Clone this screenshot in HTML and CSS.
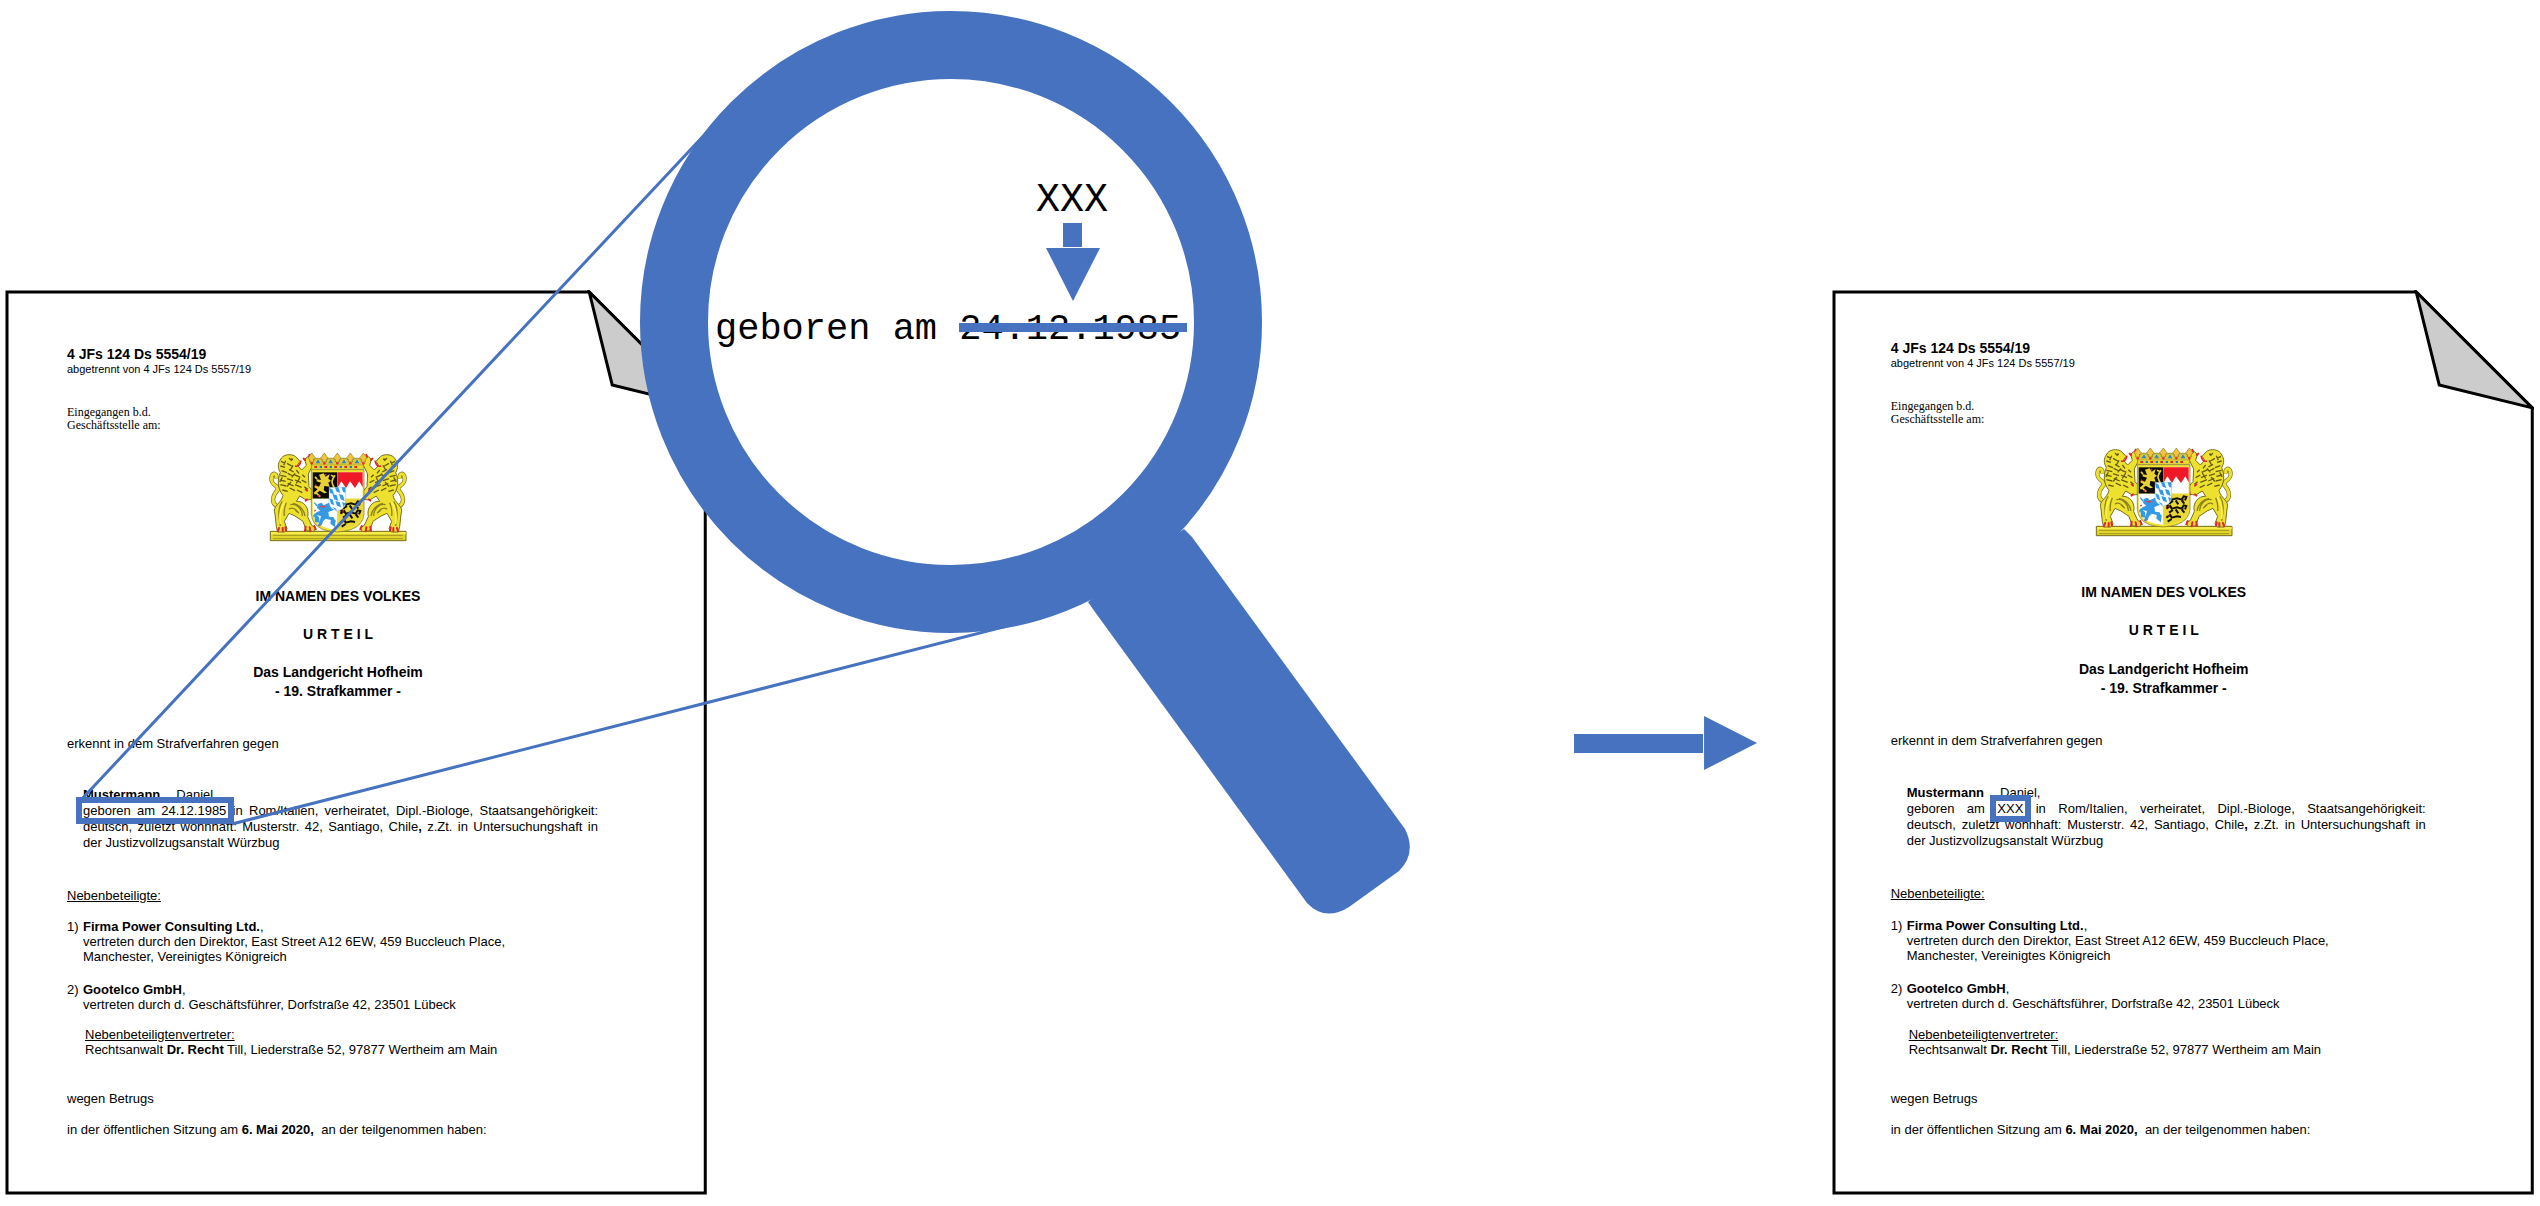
FILE: index.html
```html
<!DOCTYPE html>
<html lang="de">
<head>
<meta charset="utf-8">
<meta name="viewport" content="width=device-width, initial-scale=1">
<title>Anonymisierung eines Urteils</title>
<link rel="stylesheet" href="styles.css">
</head>
<body>
<svg class="defs" aria-hidden="true">
  <defs>
    <g id="lion">
      <path d="M78 204C50 192 60 168 74 152C78 134 50 142 56 112C60 98 72 102 70 118" fill="none" stroke="#77701c" stroke-width="13"/>
      <path d="M78 204C50 192 60 168 74 152C78 134 50 142 56 112C60 98 72 102 70 118" fill="none" stroke="#eee02f" stroke-width="9"/>
      <path d="M82 62C88 44 116 42 128 52L141 66L133 78L146 92L160 78L155 60L164 52L178 60L180 76L166 104L168 142L184 160L180 180L160 182L140 170L130 186C152 184 170 206 164 232L176 258L188 266L182 277L160 274L150 246L126 230L108 222L94 246L102 268L96 278L74 278L70 262L66 224C56 200 86 192 90 168C74 150 72 120 82 100C74 86 74 72 82 62Z" fill="#eee12e" stroke="#77701c" stroke-width="3"/>
      <path d="M84 66l12 6m-14 8l14 4m-10 10l16 6m-20 8l18 4m-20 10l18 4m-16 10l18 4m-12 12l16 4M108 56l8 8m-14 8l14 8m-8 10l14 8m-18 4l16 8m-18 8l18 6m-16 8l18 8m-12 6l16 8M130 92l8 10m-14 4l18 8m-16 8l18 8m-18 6l20 8m-14 8l16 8M148 106l8 8m-10 8l14 8m-6 12l10 8M98 64l-6 14m28 0l-8 14m14 10l-10 12m24 2l-10 16m-16-4l-12 14m-14-28l-8 14" fill="none" stroke="#655c12" stroke-width="4"/>
      <path d="M112 196c18-4 36 12 36 34m-28-38c18 4 32 18 36 38M126 212l12 10m-30-12c8-8 20-2 28 10M88 186c-12 14-12 44-6 74M100 190c-6 14-8 24-6 40" fill="none" stroke="#8b8120" stroke-width="4"/>
      <path d="M94 188c-10 20-16 36-12 66" fill="none" stroke="#fff34f" stroke-width="5"/>
      <path d="M126 80q14 4 18-16" fill="none" stroke="#e02431" stroke-width="5"/>
      <path d="M78 266l-3 10m22-12l2 10m-10-8v10M158 262l-2 12m28-14l4 10m-18-6l2 12M162 154l-4-4m24 6l4 2m-8 18l2 8m-18-4l-4 4M156 62l-4-4m16-6l2-6m8 18l4-2" stroke="#e02431" stroke-width="6" stroke-linecap="round"/>
      <circle cx="117" cy="60" r="3" fill="#554d12"/>
    </g>
    <symbol id="emblem" viewBox="48 38 414 270">
      <path d="M52 276H459V304H52Z" fill="#e2d52a" stroke="#766d18" stroke-width="3"/>
      <path d="M54 278H458V285H54Z" fill="#f7ed4a"/>
      <path d="M60 288H450M60 298H450" stroke="#a29620" stroke-width="3"/>
      <use href="#lion"/>
      <use href="#lion" transform="translate(510 0) scale(-1 1)"/>
      <path d="M176 86V68Q195 44 213 68Q233 44 253 68Q273 44 292 68Q312 44 331 68V86Z" fill="#dcc93a" stroke="#837522" stroke-width="2"/>
      <g fill="#f4c53a" stroke="#83752a" stroke-width="2">
        <path id="fleur" d="M176 41l7 10 5 5-6 4v8h-12v-8l-6-4 5-5z"/>
        <use href="#fleur" x="38"/><use href="#fleur" x="77"/><use href="#fleur" x="116"/><use href="#fleur" x="155"/>
      </g>
      <g fill="#2f86cc"><path d="M188 72l7-12 7 12zM226 72l7-12 7 12zM266 72l7-12 7 12zM305 72l7-12 7 12z"/></g>
      <g fill="#e8343a"><circle cx="176" cy="72" r="4"/><circle cx="214" cy="72" r="4"/><circle cx="253" cy="72" r="4"/><circle cx="292" cy="72" r="4"/><circle cx="331" cy="72" r="4"/></g>
      <path d="M176 77H331V90H176Z" fill="#eadb35" stroke="#837522" stroke-width="1"/>
      <path d="M184 83h8m22 0h8m22 0h8m22 0h8m22 0h8" stroke="#e02431" stroke-width="6"/>
      <path d="M200 83h7m23 0h7m23 0h7m23 0h7" stroke="#2a78bf" stroke-width="6"/>
      <path d="M175 91H333V225Q330 258 293 271Q275 276 254 278Q228 276 211 271Q178 258 175 225Z" fill="#efe236" stroke="#776d18" stroke-width="2"/>
      <path d="M179 99H253V178H179Z" fill="#0c0a05"/>
      <path d="M253 99H329V178H253Z" fill="#fff"/>
      <path d="M253 99H329V144L319 126L306 146L291 126L279 146L265 126L253 146Z" fill="#ee1827"/>
      <path d="M179 178H253V271Q184 268 180 222Z" fill="#fff"/>
      <path d="M253 178H329V222Q324 266 253 271Z" fill="#e9d736"/>
      <path d="M198 106l14-4 6 10 12-8-4 14 8 6-8 6 4 12-16-2-2 12 10 8-8 2-14-8-14 12-4-6 12-10-10-6 2-6 12 4 6-12-14-4 2-6 12 2z" fill="#e8d135"/>
      <path d="M238 164q10-14 2-26t6-30M234 108l10 4M186 112l6 8M188 160l14 12" fill="none" stroke="#e8d135" stroke-width="5"/>
      <path d="M186 136l5 4m24-36l5 4m-26 60l5 3" stroke="#e02431" stroke-width="4"/>
      <path d="M194 194l12-4 6 8 16-8 12 10 8-2-6 14-16 6 2 14 14 2 4 10-6 8-6-10-16-4-8 8-4 12-12 2 6-14 4-16-12-2-10 6-2-6 12-10 10-4-10-8z" fill="#3499e4"/>
      <path d="M186 226l10 8 2 14-10-2zm50 14l10 4-2 16-10-8zM184 190l8 10" fill="#3499e4" stroke="#3499e4" stroke-width="4"/>
      <path d="M202 200q8 6 14 0m-28 12l-4 4m18 42l-4 2" fill="none" stroke="#ee394a" stroke-width="4"/>
      <g fill="none" stroke="#12100a" stroke-width="6">
        <path id="small-lion" d="M262 196l12-8 4 8 16-4 14 4 6-10 8 2-4 10M270 208l12-8m8-2l8 12m10-12l8 10M262 188l8-2"/>
        <use href="#small-lion" y="27"/><path d="M262 250l12-8 4 8 16-4 12 2M266 262l12-8"/>
      </g>
      <path d="M270 184v8m0 20v8m0 22v6m44-54v6m0 20v6" stroke="#e02431" stroke-width="3"/>
      <path d="M228 144H278V190Q278 207 253 216Q229 208 228 190Z" fill="#f5fbff"/>
      <g fill="#3499e4"><path d="M228 146l10 4 5 15-12-4zM247 144h9l6 17-11-4-5-12zM266 144h11v16l-7-3zM238 164l13 4 5 17-12-5zM258 164l12 4 5 17-12-5zM229 177l10 4 5 17-10-5zM247 185l13 4 4 15-12-5zM267 188l10 4-5 12zM238 204l10 3 4 8z"/></g>
      <path d="M228 144H278V190Q278 207 253 216Q229 208 228 190Z" fill="none" stroke="#5b93bb" stroke-width="1"/>
    </symbol>
  </defs>
</svg>

<main class="figure">
  <article class="doc doc--original">
    <svg class="sheet" viewBox="0 0 702 906" preserveAspectRatio="none" aria-hidden="true">
      <path class="sheet__page" d="M2 2H584L700 118V904H2Z"/>
      <path class="sheet__fold" d="M584 2L607 95L700 118Z"/>
    </svg>
    <div class="doc__body">
      <header>
        <h1 class="case">4 JFs 124 Ds 5554/19</h1>
        <p class="split">abgetrennt von 4 JFs 124 Ds 5557/19</p>
      </header>
      <p class="receipt">Eingegangen b.d.<br>Geschäftsstelle am:</p>
      <svg class="emblem" role="img" aria-label="Großes bayerisches Staatswappen"><use href="#emblem"/></svg>
      <h2 class="heading heading--first">IM NAMEN DES VOLKES</h2>
      <h2 class="heading">U R T E I L</h2>
      <h2 class="heading heading--court">Das Landgericht Hofheim<br>- 19. Strafkammer -</h2>
      <p class="intro">erkennt in dem Strafverfahren gegen</p>
      <div class="person">
        <p class="name"><b>Mustermann</b><span>Daniel,</span></p>
        <p class="details"><span class="birth"><mark class="hit">geboren am 24.12.1985</mark> in Rom/Italien, verheiratet, Dipl.-Biologe, Staatsangehörigkeit:</span> deutsch, zuletzt wohnhaft: Musterstr. 42, Santiago, Chile<b>,</b> z.Zt. in Untersuchungshaft in der Justizvollzugsanstalt Würzbug</p>
      </div>
      <p class="parties-title"><u>Nebenbeteiligte:</u></p>
      <ol class="parties">
        <li><span>1)</span><p><b>Firma Power Consulting Ltd.</b>,<br>vertreten durch den Direktor, East Street A12 6EW, 459 Buccleuch Place,<br>Manchester, Vereinigtes Königreich</p></li>
        <li><span>2)</span><p><b>Gootelco GmbH</b>,<br>vertreten durch d. Geschäftsführer, Dorfstraße 42, 23501 Lübeck</p></li>
      </ol>
      <p class="counsel"><u>Nebenbeteiligtenvertreter:</u><br>Rechtsanwalt <b>Dr. Recht</b> Till, Liederstraße 52, 97877 Wertheim am Main</p>
      <p class="charge">wegen Betrugs</p>
      <p class="session">in der öffentlichen Sitzung am <b>6. Mai 2020,</b>&nbsp; an der teilgenommen haben:</p>
    </div>
  </article>

  <svg class="arrow" viewBox="0 0 184 54" role="img" aria-label="wird zu">
    <path d="M0 18H129V37H0ZM130 0L183 27L130 54Z"/>
  </svg>

  <article class="doc doc--redacted">
    <svg class="sheet" viewBox="0 0 702 906" preserveAspectRatio="none" aria-hidden="true">
      <path class="sheet__page" d="M2 2H584L700 118V904H2Z"/>
      <path class="sheet__fold" d="M584 2L607 95L700 118Z"/>
    </svg>
    <div class="doc__body">
      <header>
        <h1 class="case">4 JFs 124 Ds 5554/19</h1>
        <p class="split">abgetrennt von 4 JFs 124 Ds 5557/19</p>
      </header>
      <p class="receipt">Eingegangen b.d.<br>Geschäftsstelle am:</p>
      <svg class="emblem" role="img" aria-label="Großes bayerisches Staatswappen"><use href="#emblem"/></svg>
      <h2 class="heading heading--first">IM NAMEN DES VOLKES</h2>
      <h2 class="heading">U R T E I L</h2>
      <h2 class="heading heading--court">Das Landgericht Hofheim<br>- 19. Strafkammer -</h2>
      <p class="intro">erkennt in dem Strafverfahren gegen</p>
      <div class="person">
        <p class="name"><b>Mustermann</b><span>Daniel,</span></p>
        <p class="details"><span class="birth">geboren am <mark class="hit">XXX</mark> in Rom/Italien, verheiratet, Dipl.-Biologe, Staatsangehörigkeit:</span> deutsch, zuletzt wohnhaft: Musterstr. 42, Santiago, Chile<b>,</b> z.Zt. in Untersuchungshaft in der Justizvollzugsanstalt Würzbug</p>
      </div>
      <p class="parties-title"><u>Nebenbeteiligte:</u></p>
      <ol class="parties">
        <li><span>1)</span><p><b>Firma Power Consulting Ltd.</b>,<br>vertreten durch den Direktor, East Street A12 6EW, 459 Buccleuch Place,<br>Manchester, Vereinigtes Königreich</p></li>
        <li><span>2)</span><p><b>Gootelco GmbH</b>,<br>vertreten durch d. Geschäftsführer, Dorfstraße 42, 23501 Lübeck</p></li>
      </ol>
      <p class="counsel"><u>Nebenbeteiligtenvertreter:</u><br>Rechtsanwalt <b>Dr. Recht</b> Till, Liederstraße 52, 97877 Wertheim am Main</p>
      <p class="charge">wegen Betrugs</p>
      <p class="session">in der öffentlichen Sitzung am <b>6. Mai 2020,</b>&nbsp; an der teilgenommen haben:</p>
    </div>
  </article>

  <svg class="magnifier" viewBox="0 0 2540 1206">
    <path class="sight-line" d="M80 801L708 131M232 824L1027 621"/>
    <circle class="lens" cx="951" cy="322" r="277"/>
    <path class="handle" d="M1140 560L1184 529L1192 537L1405 829Q1417 853 1399 871L1349 907Q1325 922 1307 903L1095 612L1088 602Z"/>
    <text class="lens-text" x="715" y="339">geboren am 24.12.1985</text>
    <path class="shape" d="M959 323H1187V332H959Z"/>
    <text class="lens-text lens-text--mask" x="1036" y="211">XXX</text>
    <path class="shape" d="M1063 223H1082V247H1063ZM1046 248H1100L1073 301Z"/>
  </svg>
</main>
</body>
</html>
```
FILE: styles.css
```css
:root {
  --blue: #4672c0;
  --sans: "Liberation Sans", Arial, sans-serif;
}

* {
  box-sizing: border-box;
}

body {
  margin: 0;
  background: #fff;
  color: #000;
  font: 13px/15px var(--sans);
}

h1, h2, p, ol {
  margin: 0;
  padding: 0;
}

.defs {
  position: absolute;
  width: 0;
  height: 0;
}

.figure {
  position: relative;
  display: grid;
  grid-template-columns: 702fr 184fr 702fr;
  column-gap: 3%;
  align-items: start;
  padding: 290px 6px 9px 5px;
}

@media (min-width: 1600px) {
  .figure {
    grid-template-columns: 702fr 866fr 184fr 74fr 702fr;
    column-gap: 0;
  }

  .arrow {
    grid-column: 3;
  }

  .doc--redacted {
    grid-column: 5;
  }
}

/* Document sheets */
.doc {
  --case-gap: 56px;
  --start: 62px;
  --measure: 542px;
  --emblem-gap: 20px;
  --first-gap: 46px;
  --court-gap: 21px;
  --person-gap: 36px;
  --parties-gap: 16px;
  --counsel-gap: 15px;
  position: relative;
  padding: var(--case-gap) 0 58px var(--start);
}

.doc--redacted {
  --case-gap: 50px;
  --start: 59px;
  --measure: 546px;
  --emblem-gap: 21px;
  --first-gap: 47px;
  --court-gap: 22px;
  --person-gap: 37px;
  --parties-gap: 17px;
  --counsel-gap: 16px;
}

.sheet {
  position: absolute;
  inset: 0;
  width: 100%;
  height: 100%;
}

.sheet__page,
.sheet__fold {
  fill: #fff;
  stroke: #000;
  stroke-width: 3;
}

.sheet__fold {
  fill: #ccc;
}

.doc__body {
  position: relative;
  max-width: var(--measure);
}

.case {
  font-size: 14px;
  line-height: 16px;
}

.split {
  font-size: 11px;
  line-height: 14px;
}

.receipt {
  margin-top: 30px;
  font: 12px/13px "Liberation Serif", "Times New Roman", serif;
}

.emblem {
  display: block;
  width: 138px;
  height: 90px;
  margin: var(--emblem-gap) auto 0;
}

.heading {
  margin-top: 22px;
  font-size: 14px;
  line-height: 16px;
  text-align: center;
}

.heading--first {
  margin-top: var(--first-gap);
}

.heading--court {
  margin-top: var(--court-gap);
  line-height: 19px;
}

.intro {
  margin-top: 35px;
}

.person {
  margin-top: var(--person-gap);
  padding: 0 11px 0 16px;
  line-height: 16px;
}

.name {
  display: flex;
  gap: 16px;
}

.details {
  text-align: justify;
}

.birth {
  display: block;
  text-align-last: justify;
}

.hit {
  position: relative;
  background: none;
  color: inherit;
}

.hit::after {
  content: "";
  position: absolute;
  inset: -6px -8px -6px -7px;
  border: 6px solid var(--blue);
}

.parties-title {
  margin-top: 37px;
}

.parties {
  display: grid;
  gap: 18px;
  margin-top: var(--parties-gap);
  list-style: none;
}

.parties li {
  display: grid;
  grid-template-columns: 16px 1fr;
}

.counsel {
  margin-top: var(--counsel-gap);
  padding-left: 18px;
}

.charge {
  margin-top: 34px;
}

.session {
  margin-top: 16px;
}

/* Arrow between the two sheets */
.arrow {
  width: 100%;
  margin-top: 426px;
  fill: var(--blue);
}

/* Magnifying glass lying over the first sheet */
.magnifier {
  position: absolute;
  top: 0;
  left: 0;
  width: 100%;
  pointer-events: none;
}

.sight-line {
  fill: none;
  stroke: var(--blue);
  stroke-width: 3;
}

.lens {
  fill: #fff;
  stroke: var(--blue);
  stroke-width: 68;
}

.handle,
.shape {
  fill: var(--blue);
}

.lens-text {
  font: 37px "Liberation Mono", "Courier New", monospace;
}

.lens-text--mask {
  font-size: 40px;
}
```
